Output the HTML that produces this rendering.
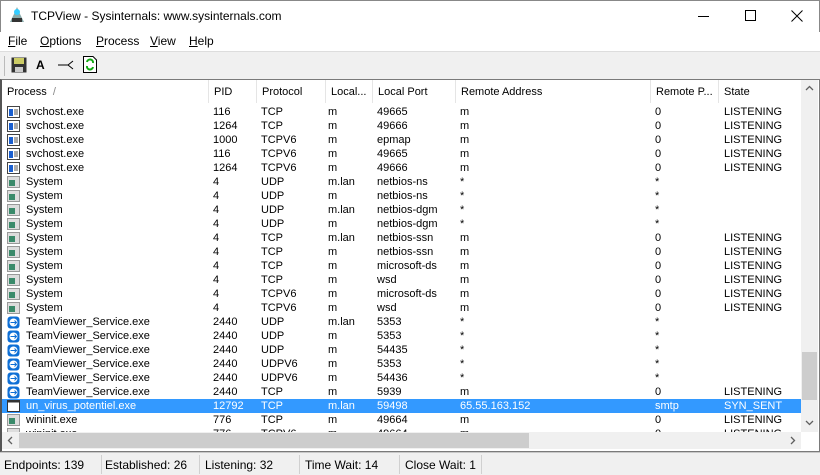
<!DOCTYPE html>
<html><head><meta charset="utf-8"><style>
*{margin:0;padding:0;box-sizing:border-box}
body{width:820px;height:475px;overflow:hidden;background:#f0f0f0;font-family:"Liberation Sans",Arial,sans-serif;font-size:11px;color:#000;position:relative}
.abs{position:absolute}
#title{left:0;top:0;width:820px;height:32px;background:#fff;border:1px solid #888;border-bottom:none}
#menu{left:0;top:32px;width:820px;height:19px;background:#fff;font-size:12px}
#menu span{position:absolute;top:2px}
#tb{left:0;top:51px;width:820px;height:28px;background:#f0f0f0;border-top:1px solid #ddd}
#list{left:0;top:79px;width:820px;height:373px;background:#fff;border:1px solid #7a7a7a;border-left:2px solid #555;overflow:hidden}
.hd{position:absolute;top:0;height:23px;border-right:1px solid #e5e5e5;padding:6px 0 0 5px;font-size:11px;white-space:nowrap}
.row{position:absolute;left:0;width:800px;height:14px;line-height:14px}
.row span{position:absolute;top:0;white-space:nowrap}
.sel{background:#3399ff;color:#fff}
.ic{position:absolute;left:5px;top:1px;width:13px;height:12px}
#vs{left:801px;top:80px;width:17px;height:352px;background:#f0f0f0}
#hs{left:2px;top:432px;width:799px;height:17px;background:#f0f0f0}
#status{left:0;top:452px;width:820px;height:23px;background:#f0f0f0;border-top:1px solid #c8c8c8;font-size:12px}
#status span{position:absolute;top:5px}
.sep{position:absolute;top:2px;width:1px;height:19px;background:#d0d0d0}
</style></head><body>
<div id="title" class="abs">
<svg class="abs" style="left:8px;top:5px" width="16" height="18" viewBox="0 0 16 18"><path d="M8 1 L11 8 L15 16 L1 16 L5 8Z" fill="#8aa"/><circle cx="8" cy="6" r="3" fill="#3cf"/><rect x="3" y="12" width="10" height="4" fill="#333"/></svg>
<span class="abs" style="left:30px;top:8px;font-size:12px">TCPView - Sysinternals: www.sysinternals.com</span>
<div class="abs" style="left:697px;top:15px;width:11px;height:1px;background:#000"></div>
<div class="abs" style="left:744px;top:9px;width:11px;height:11px;border:1px solid #000"></div>
<svg class="abs" style="left:790px;top:9px" width="12" height="12"><path d="M0.5 0.5L11.5 11.5M11.5 0.5L0.5 11.5" stroke="#000" stroke-width="1"/></svg>
</div>
<div id="menu" class="abs">
<span style="left:8px"><u>F</u>ile</span><span style="left:40px"><u>O</u>ptions</span><span style="left:96px"><u>P</u>rocess</span><span style="left:150px"><u>V</u>iew</span><span style="left:189px"><u>H</u>elp</span>
</div>
<div id="tb" class="abs">
<div class="abs" style="left:4px;top:4px;width:1px;height:20px;background:#bbb"></div>
<svg class="abs" style="left:11px;top:5px" width="16" height="16"><rect x="0.5" y="0.5" width="15" height="15" fill="#333"/><rect x="3" y="1" width="10" height="6" fill="#cc6"/><rect x="4" y="10" width="8" height="5" fill="#ccc"/></svg>
<span class="abs" style="left:36px;top:6px;font-weight:bold;font-size:12px">A</span>
<svg class="abs" style="left:58px;top:8px" width="16" height="10"><path d="M0 5H10M10 5L15 1M10 5L15 9" stroke="#000" fill="none"/></svg>
<svg class="abs" style="left:83px;top:4px" width="14" height="17"><path d="M0.5 0.5H10L13.5 4V16.5H0.5Z" fill="#fff" stroke="#000"/><path d="M4 6A3 3 0 0 1 10 7M10 11A3 3 0 0 1 4 10" stroke="#1a1" stroke-width="2" fill="none"/></svg>
</div>
<div id="list" class="abs">
<div class="hd" style="left:0;width:207px">Process&nbsp;&nbsp;<span style="color:#888">/</span></div>
<div class="hd" style="left:207px;width:48px">PID</div>
<div class="hd" style="left:255px;width:69px">Protocol</div>
<div class="hd" style="left:324px;width:47px">Local...</div>
<div class="hd" style="left:371px;width:83px">Local Port</div>
<div class="hd" style="left:454px;width:195px">Remote Address</div>
<div class="hd" style="left:649px;width:68px">Remote P...</div>
<div class="hd" style="left:717px;width:83px">State</div>
<div id="rows"></div>
</div>
<div id="vs" class="abs">
<svg class="abs" style="left:4px;top:5px" width="9" height="6"><path d="M1 5L4.5 1.5L8 5" stroke="#606060" stroke-width="1.3" fill="none"/></svg>
<div class="abs" style="left:1px;top:272px;width:15px;height:48px;background:#cdcdcd"></div>
<svg class="abs" style="left:4px;top:340px" width="9" height="6"><path d="M1 1L4.5 4.5L8 1" stroke="#606060" stroke-width="1.3" fill="none"/></svg>
</div>
<div id="hs" class="abs">
<svg class="abs" style="left:5px;top:4px" width="6" height="9"><path d="M5 1L1.5 4.5L5 8" stroke="#606060" stroke-width="1.3" fill="none"/></svg>
<div class="abs" style="left:17px;top:1px;width:510px;height:15px;background:#cdcdcd"></div>
<svg class="abs" style="left:788px;top:4px" width="6" height="9"><path d="M1 1L4.5 4.5L1 8" stroke="#606060" stroke-width="1.3" fill="none"/></svg>
</div>
<div id="status" class="abs">
<span style="left:4px">Endpoints: 139</span><div class="sep" style="left:101px"></div>
<span style="left:105px">Established: 26</span><div class="sep" style="left:199px"></div>
<span style="left:205px">Listening: 32</span><div class="sep" style="left:299px"></div>
<span style="left:305px">Time Wait: 14</span><div class="sep" style="left:399px"></div>
<span style="left:405px">Close Wait: 1</span><div class="sep" style="left:481px"></div>
</div>
<script>
var S='svc',Y='sys',T='tv',U='un',W='win';
var d=[[S,'svchost.exe','116','TCP','m','49665','m','0','LISTENING'],
[S,'svchost.exe','1264','TCP','m','49666','m','0','LISTENING'],
[S,'svchost.exe','1000','TCPV6','m','epmap','m','0','LISTENING'],
[S,'svchost.exe','116','TCPV6','m','49665','m','0','LISTENING'],
[S,'svchost.exe','1264','TCPV6','m','49666','m','0','LISTENING'],
[Y,'System','4','UDP','m.lan','netbios-ns','*','*',''],
[Y,'System','4','UDP','m','netbios-ns','*','*',''],
[Y,'System','4','UDP','m.lan','netbios-dgm','*','*',''],
[Y,'System','4','UDP','m','netbios-dgm','*','*',''],
[Y,'System','4','TCP','m.lan','netbios-ssn','m','0','LISTENING'],
[Y,'System','4','TCP','m','netbios-ssn','m','0','LISTENING'],
[Y,'System','4','TCP','m','microsoft-ds','m','0','LISTENING'],
[Y,'System','4','TCP','m','wsd','m','0','LISTENING'],
[Y,'System','4','TCPV6','m','microsoft-ds','m','0','LISTENING'],
[Y,'System','4','TCPV6','m','wsd','m','0','LISTENING'],
[T,'TeamViewer_Service.exe','2440','UDP','m.lan','5353','*','*',''],
[T,'TeamViewer_Service.exe','2440','UDP','m','5353','*','*',''],
[T,'TeamViewer_Service.exe','2440','UDP','m','54435','*','*',''],
[T,'TeamViewer_Service.exe','2440','UDPV6','m','5353','*','*',''],
[T,'TeamViewer_Service.exe','2440','UDPV6','m','54436','*','*',''],
[T,'TeamViewer_Service.exe','2440','TCP','m','5939','m','0','LISTENING'],
[U,'un_virus_potentiel.exe','12792','TCP','m.lan','59498','65.55.163.152','smtp','SYN_SENT'],
[W,'wininit.exe','776','TCP','m','49664','m','0','LISTENING'],
[W,'wininit.exe','776','TCPV6','m','49664','m','0','LISTENING']];
var xs=[24,211,259,326,375,458,653,722];
var icons={svc:'<svg class="ic" viewBox="0 0 13 12"><rect x="0.5" y="0.5" width="12" height="11" fill="#fff" stroke="#444"/><rect x="2" y="3" width="4" height="7" fill="#1a5fd0"/><path d="M7 4H11M7 6H11M7 8H11" stroke="#555"/></svg>',
sys:'<svg class="ic" viewBox="0 0 13 12"><rect x="0.5" y="0.5" width="12" height="11" fill="#ddd" stroke="#999"/><rect x="2" y="4" width="6" height="6" fill="#3a8a6a"/></svg>',
tv:'<svg class="ic" viewBox="0 0 13 13" style="height:13px"><rect x="0.5" y="0.5" width="12" height="12" rx="3" fill="#0e6fd6"/><circle cx="6.5" cy="6.5" r="4" fill="#fff"/><path d="M3.5 6.5H9.5M7.5 4.5L9.5 6.5L7.5 8.5" stroke="#0e6fd6" fill="none"/></svg>',
un:'<svg class="ic" viewBox="0 0 13 12"><rect x="0.5" y="0.5" width="12" height="11" fill="#fff" stroke="#333"/><rect x="0.5" y="0.5" width="12" height="2" fill="#333"/></svg>',
win:'<svg class="ic" viewBox="0 0 13 12"><rect x="0.5" y="0.5" width="12" height="11" fill="#ddd" stroke="#999"/><rect x="2" y="4" width="6" height="6" fill="#3a8a6a"/></svg>'};
var h='';
d.forEach(function(r,i){h+='<div class="row'+(r[0]==U?' sel':'')+'" style="top:'+(25+14*i)+'px">'+icons[r[0]];
for(var k=1;k<9;k++)h+='<span style="left:'+xs[k-1]+'px">'+r[k]+'</span>';h+='</div>';});
document.getElementById('rows').innerHTML=h;
</script>
</body></html>
